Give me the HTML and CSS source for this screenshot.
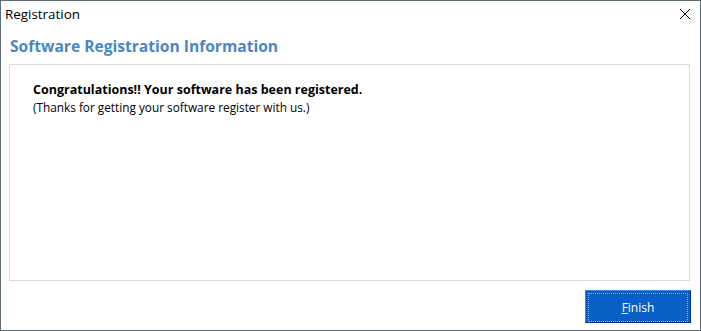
FILE: index.html
```html
<!DOCTYPE html>
<html lang="en">
<head>
  <meta charset="UTF-8">
  <title>Registration</title>
  <link rel="stylesheet" href="styles.css">
</head>
<body>
  <div class="window">
    <div class="titlebar">
      <span class="title">Registration</span>
      <span class="close">
        <svg width="12" height="12" viewBox="0 0 12 12">
          <path d="M1 1 L11 11 M11 1 L1 11" stroke="#000" stroke-width="1" fill="none"/>
        </svg>
      </span>
    </div>
    <h1 class="heading">Software Registration Information</h1>
    <div class="panel">
      <p class="msg">Congratulations!! Your software has been registered.</p>
      <p class="sub">(Thanks for getting your software register with us.)</p>
    </div>
    <div class="actions">
      <button class="finish"><span class="focus"><u>F</u>inish</span></button>
    </div>
  </div>
</body>
</html>
```
FILE: styles.css
```css
html, body {
  margin: 0;
  padding: 0;
  background: #fff;
}
.window {
  width: 699px;
  height: 329px;
  border: 1px solid #5f6b73;
  background: #fff;
  font-family: "Open Sans", "Noto Sans", sans-serif;
  display: flex;
  flex-direction: column;
}
.titlebar {
  height: 26px;
  display: flex;
  align-items: center;
  justify-content: space-between;
  padding: 0 9px 0 4px;
}
.title {
  font-size: 13.4px;
  color: #000;
}
.close {
  display: flex;
}
.heading {
  margin: 0 0 0 9px;
  padding: 7px 0 0;
  font-size: 15.6px;
  font-weight: bold;
  color: #4a87c4;
  height: 30px;
  line-height: 24px;
}
.panel {
  box-sizing: border-box;
  margin: 0 10px 0 8px;
  height: 217px;
  border: 1px solid #d9d9d9;
  padding: 16px 23px;
}
.msg {
  margin: 0;
  font-size: 12.5px;
  font-weight: bold;
  color: #000;
  line-height: 18px;
}
.sub {
  margin: 0;
  font-size: 11.8px;
  color: #000;
  line-height: 16px;
}
.actions {
  display: flex;
  justify-content: flex-end;
  padding: 9px 9px 0 0;
}
.finish {
  width: 106px;
  height: 33px;
  padding: 2px;
  background: #0a5fc6;
  border: 1px solid;
  border-color: #2f86e6 #002f8a #002f8a #2f86e6;
  cursor: pointer;
}
.focus {
  display: flex;
  align-items: center;
  justify-content: center;
  height: 100%;
  border: 1px dotted #f5a03a;
  font-family: "Open Sans", "Noto Sans", sans-serif;
  font-size: 12px;
  color: #fff;
}
```
